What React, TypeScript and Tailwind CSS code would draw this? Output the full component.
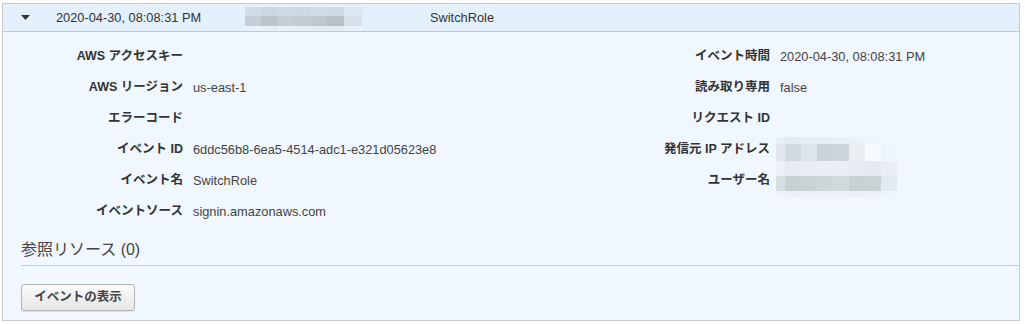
import React from "react";

const font = { fontFamily: '"Liberation Sans", "Noto Sans CJK JP", sans-serif' };

type Row = { label: string; value?: string };

const leftRows: Row[] = [
  { label: "AWS アクセスキー" },
  { label: "AWS リージョン", value: "us-east-1" },
  { label: "エラーコード" },
  { label: "イベント ID", value: "6ddc56b8-6ea5-4514-adc1-e321d05623e8" },
  { label: "イベント名", value: "SwitchRole" },
  { label: "イベントソース", value: "signin.amazonaws.com" },
];

const rightRows: Row[] = [
  { label: "イベント時間", value: "2020-04-30, 08:08:31 PM" },
  { label: "読み取り専用", value: "false" },
  { label: "リクエスト ID" },
  { label: "発信元 IP アドレス" },
  { label: "ユーザー名" },
];

// pixelated redaction blocks
function Mosaic({
  cols,
  rows,
}: {
  cols: number[];
  rows: { h: number; colors: string[] }[];
}) {
  return (
    <div className="flex flex-col">
      {rows.map((r, i) => (
        <div key={i} className="flex">
          {cols.map((w, j) => (
            <div
              key={j}
              style={{ width: w, height: r.h, background: r.colors[j] ?? r.colors[r.colors.length - 1] }}
            />
          ))}
        </div>
      ))}
    </div>
  );
}

function DetailRow({ row, labelWidth }: { row: Row; labelWidth: string }) {
  return (
    <div className="flex h-[31px] items-center">
      <div className={`${labelWidth} shrink-0 text-right text-[12.5px] font-bold text-[#333]`}>
        {row.label}
      </div>
      <div className="pl-[10px] text-[12.8px] text-[#444]">{row.value}</div>
    </div>
  );
}

export default function App() {
  return (
    <div className="bg-white pt-[3px] pl-[2px]" style={font}>
      <div className="w-[1018px] border border-[#c8c8c8] bg-[#f0f7fe]">
        {/* summary row */}
        <div className="flex h-[28px] items-center border-b border-[#c4c9cf] bg-[#e4f0fc] text-[12.8px] text-[#333]">
          <div className="w-[53px] shrink-0 pl-[18px]">
            <svg width="9" height="5" viewBox="0 0 9 5" className="block">
              <path d="M0 0h9L4.5 5z" fill="#333" />
            </svg>
          </div>
          <div className="w-[189px] shrink-0">2020-04-30, 08:08:31 PM</div>
          <div className="w-[185px] shrink-0 self-end">
            <Mosaic
              cols={[16, 17, 16, 17, 16, 17, 18]}
              rows={[
                { h: 9, colors: ["#d3dde5", "#cdd7e0", "#d0dae3", "#ced8e1", "#d3dde5", "#d0dae3", "#dde7f0"] },
                { h: 10, colors: ["#c4cfd7", "#bac5cd", "#c3ced6", "#c0cbd3", "#bdc8d0", "#b6c1c9", "#d6e1ea"] },
                { h: 5, colors: ["#e8f1fa", "#e5eef7", "#e8f1fa", "#e6eff8", "#e5eef7", "#e3ecf5", "#e9f2fb"] },
              ]}
            />
          </div>
          <div>SwitchRole</div>
        </div>

        {/* details */}
        <div className="flex pt-[9px]">
          <div className="w-[508px] shrink-0">
            {leftRows.map((r) => (
              <DetailRow key={r.label} row={r} labelWidth="w-[180px]" />
            ))}
          </div>
          <div className="relative flex-1">
            {rightRows.map((r) => (
              <DetailRow key={r.label} row={r} labelWidth="w-[259px]" />
            ))}
            <div className="absolute left-[265px] top-[96px]">
              <Mosaic
                cols={[9, 16, 16, 16, 16, 16, 16, 16]}
                rows={[
                  { h: 7, colors: ["#e8eff5", "#e4ebf1", "#e6edf3", "#e5ecf2", "#e7eef4", "#eaf1f7", "#eef5fb", "#f0f7fe"] },
                  { h: 17, colors: ["#e0e7ed", "#d2d9e0", "#dde4ea", "#ccd3d8", "#cfd6da", "#e9eff2", "#f5fcff", "#eff6fc"] },
                  { h: 15, colors: ["#eaf0f6", "#e6ecf2", "#e7edf3", "#e9eff5", "#e8eef3", "#e6ecf2", "#e4eaf0", "#e9eff5"] },
                  { h: 15, colors: ["#d8dfe3", "#c9d0d4", "#cbd2d6", "#cfd6da", "#d3dade", "#c9d0d4", "#cbd2d6", "#e2e9ef"] },
                  { h: 6, colors: ["#edf3f9", "#eaf0f6", "#ebf1f7", "#ecf2f8", "#ebf1f7", "#eaf0f6", "#ecf2f8", "#eef5fb"] },
                ]}
              />
            </div>
          </div>
        </div>

        {/* referenced resources */}
        <div className="ml-[18px] mt-[13px] border-b border-[#c5ccd3] pb-[5px] text-[16px] leading-[20px] text-[#444]">
          参照リソース (0)
        </div>
        <div className="pl-[18px] pt-[18px] pb-[9px]">
          <button className="h-[27px] w-[114px] rounded-[3px] border border-[#b4b4b4] bg-gradient-to-b from-[#fafafa] to-[#e6e6e6] text-[12.5px] font-bold text-[#444] shadow-[0_1px_1px_rgba(0,0,0,0.1)]">
            イベントの表示
          </button>
        </div>
      </div>
    </div>
  );
}
